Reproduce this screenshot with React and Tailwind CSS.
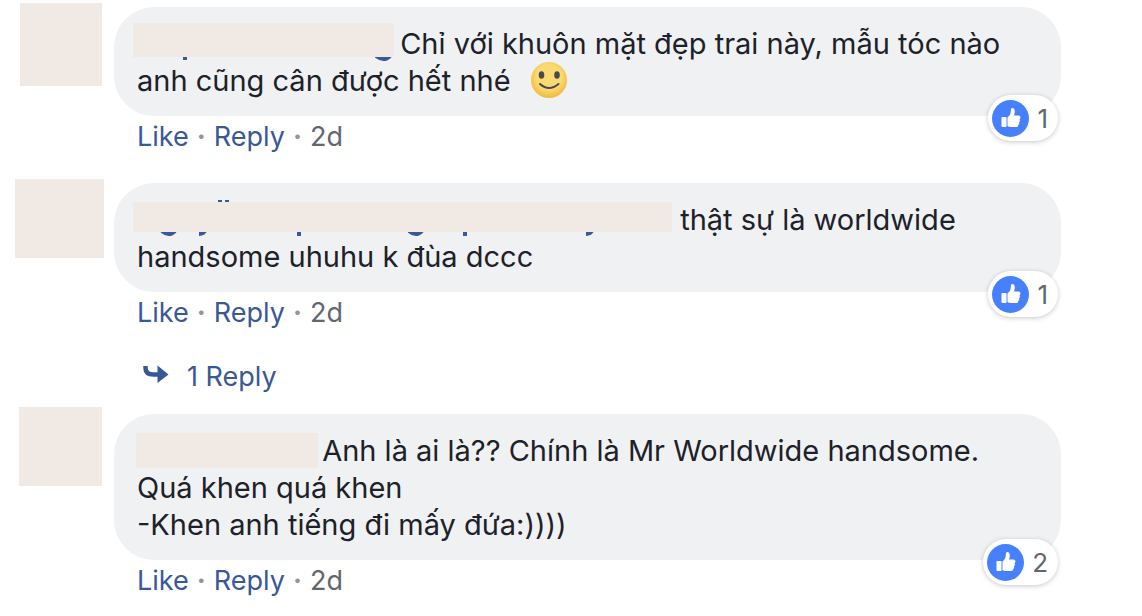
const comments = [
  {
    avatar: 'w-[82px] h-[83px] -mt-1 mr-3',
    cover: 'w-[261px] h-[34px] -top-0.5 -left-1',
    nameWidth: 'w-[255px]',
    marks: 'M48 28v7M239 31q8 6 14 0',
    lines: ['Chỉ với khuôn mặt đẹp trai này, mẫu tóc nào', 'anh cũng cân được hết nhé'],
    smile: true,
    likes: 1,
  },
  {
    avatar: 'w-[89px] h-[79px] -mt-1 mr-2.5',
    cover: 'w-[539px] h-[30px] top-px -left-1',
    nameWidth: 'w-[535px]',
    marks: 'M25 30q7 6 13 0M62 33q5 0 7-5M162 28v7M272 30q7 6 13 0M328 28v7M449 33q5 0 7-5M81 1h4M88 1h4',
    lines: ['thật sự là worldwide', 'handsome uhuhu k đùa dccc'],
    likes: 1,
    replies: 1,
  },
  {
    avatar: 'w-[83px] h-[79px] -mt-[7px] mr-3',
    cover: 'w-[182px] h-[35px] top-px -left-px',
    nameWidth: 'w-[177px]',
    lines: ['Anh là ai là?? Chính là Mr Worldwide handsome.', 'Quá khen quá khen', '-Khen anh tiếng đi mấy đứa:))))'],
    likes: 2,
  },
]

function Smile() {
  return (
    <svg viewBox="0 0 36 36" className="ml-5 inline-block size-9 align-top" role="img" aria-label="smile">
      <defs>
        <radialGradient id="face" cx="50%" cy="42%" r="58%">
          <stop offset="60%" stopColor="#fbd971" />
          <stop offset="100%" stopColor="#f0b83c" />
        </radialGradient>
      </defs>
      <circle cx="18" cy="18" r="18" fill="url(#face)" />
      <ellipse cx="10.500" cy="13" rx="2.800" ry="3.800" fill="#444a50" />
      <ellipse cx="26" cy="13" rx="2.800" ry="3.800" fill="#444a50" />
      <path d="M9 22q9 8 18.500 0" fill="none" stroke="#444a50" strokeWidth="2" strokeLinecap="round" />
    </svg>
  )
}

function Thumb() {
  return (
    <svg viewBox="0 0 37 37" className="size-[37px]" aria-hidden="true">
      <circle cx="18.500" cy="18.500" r="18.500" fill="#4680ff" />
      <rect x="9.500" y="17" width="5" height="10" rx=".8" fill="#fff" />
      <path
        d="M15.500 17.500c2-1.500 3-3.100 3.300-5.700.1-1.700.1-3.500 1.100-3.800 1.700-.4 2.900 1 2.900 3.300 0 1.600-.4 3-.8 4.200h4.300c1.500 0 2.300 1 2.100 2.200-.1.700-.5 1.200-1 1.500.5.400.7 1 .5 1.700-.1.700-.5 1.200-1 1.400.3.500.4 1 .2 1.600-.2.600-.6 1-1.100 1.200.4 1.300-.5 2-2 2h-4.500c-1.800 0-3-.5-4-1.200z"
        fill="#fff"
      />
    </svg>
  )
}

function ReplyArrow() {
  return (
    <svg viewBox="0 0 26 26" className="size-[26px]" aria-hidden="true">
      <path d="M2.500 2v2q0 6.500 8 6.500h6" fill="none" stroke="#385898" strokeWidth="4.500" />
      <path d="M14.500 1.500L25.500 10.500 14.500 19z" fill="#385898" />
    </svg>
  )
}

function Comment({ comment }) {
  return (
    <article className="flex items-start">
      <div className="flex w-[114px] shrink-0 justify-end">
        <div className={`bg-[#f0e9e4] ${comment.avatar}`} />
      </div>
      <div className="flex-1">
        <div className="relative rounded-[40px] bg-[#eff1f3] px-[23px] pt-[18px] pb-[17px]">
          <div className="text-[29px] leading-[37px]">
            <p>
              <span className={`relative inline-block h-[37px] align-top ${comment.nameWidth}`}>
                {comment.marks && (
                  <svg className="absolute inset-0 h-full w-full overflow-visible" aria-hidden="true">
                    <path d={comment.marks} fill="none" stroke="#385898" strokeWidth="4" />
                  </svg>
                )}
                <span className={`absolute bg-[#f0e9e4] ${comment.cover}`} />
              </span>{' '}
              {comment.lines[0]}
            </p>
            {comment.lines.slice(1).map((line) => (
              <p key={line}>
                {line}
                {comment.smile && <Smile />}
              </p>
            ))}
          </div>
          <div className="absolute right-[3px] -bottom-[25px] flex h-[46px] items-center gap-2 rounded-full bg-white pr-2.5 pl-1 text-[#616770] shadow-[0_1px_5px_rgba(0,0,0,0.22)]">
            <Thumb />
            <span>{comment.likes}</span>
          </div>
        </div>
        <div className="mt-0.5 flex gap-2 pl-[23px] text-[27px] text-[#616770]">
          <a href="#like" className="text-[#385898]">Like</a>
          <span className="font-bold text-[#90949c]">·</span>
          <a href="#reply" className="text-[#385898]">Reply</a>
          <span className="font-bold text-[#90949c]">·</span>
          <span>2d</span>
        </div>
        {comment.replies && (
          <a href="#replies" className="mt-[27px] -mb-[9px] flex items-center gap-[18px] pl-[29px] text-[27px] text-[#385898]">
            <ReplyArrow />
            {comment.replies} Reply
          </a>
        )}
      </div>
    </article>
  )
}

export default function App() {
  return (
    <main className="flex flex-col gap-7 bg-white pt-[7px] pr-[81px] font-['Inter',sans-serif] text-[26px] leading-[37px] text-[#1d2129]">
      {comments.map((comment) => (
        <Comment key={comment.lines[0]} comment={comment} />
      ))}
    </main>
  )
}
